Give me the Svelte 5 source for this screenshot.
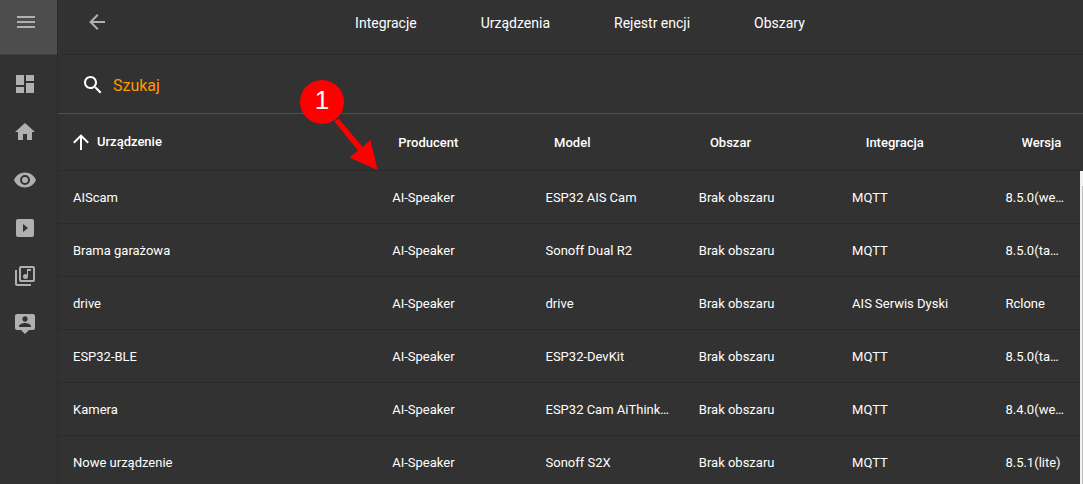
<script>
  const icons = {
    menu: 'M3,6H21V8H3V6M3,11H21V13H3V11M3,16H21V18H3V16Z',
    back: 'M20,11V13H8L13.5,18.5L12.08,19.92L4.16,12L12.08,4.08L13.5,5.5L8,11H20Z',
    search: 'M15.5 14h-.79l-.28-.27C15.41 12.59 16 11.11 16 9.5 16 5.91 13.09 3 9.5 3S3 5.91 3 9.5 5.91 16 9.5 16c1.61 0 3.09-.59 4.23-1.57l.27.28v.79l5 4.99L20.49 19l-4.99-5zm-6 0C7.01 14 5 11.99 5 9.5S7.01 5 9.5 5 14 7.01 14 9.5 11.99 14 9.5 14z',
    up: 'M13,20H11V8L5.5,13.5L4.08,12.08L12,4.16L19.92,12.08L18.5,13.5L13,8V20Z',
  };
  const sidebar = [
    { label: 'Pulpit', d: 'M13,3V9H21V3M13,21H21V11H13M3,21H11V15H3M3,13H11V3H3V13Z' },
    { label: 'Dom', d: 'M10,20V14H14V20H19V12H22L12,3L2,12H5V20H10Z' },
    { label: 'Podgląd', d: 'M12,9A3,3 0 0,0 9,12A3,3 0 0,0 12,15A3,3 0 0,0 15,12A3,3 0 0,0 12,9M12,17A5,5 0 0,1 7,12A5,5 0 0,1 12,7A5,5 0 0,1 17,12A5,5 0 0,1 12,17M12,4.5C7,4.5 2.73,7.61 1,12C2.73,16.39 7,19.5 12,19.5C17,19.5 21.27,16.39 23,12C21.27,7.61 17,4.5 12,4.5Z' },
    { label: 'Wideo', d: 'M19,3H5C3.89,3 3,3.89 3,5V19A2,2 0 0,0 5,21H19A2,2 0 0,0 21,19V5C21,3.89 20.1,3 19,3M10,16V8L15,12' },
    { label: 'Muzyka', d: 'M4,6H2V20A2,2 0 0,0 4,22H18V20H4M20,2H8A2,2 0 0,0 6,4V16A2,2 0 0,0 8,18H20A2,2 0 0,0 22,16V4A2,2 0 0,0 20,2M20,16H8V4H20M12.5,15A2.5,2.5 0 0,0 15,12.5V7H18V5H14V10.5C13.58,10.19 13.07,10 12.5,10A2.5,2.5 0 0,0 10,12.5A2.5,2.5 0 0,0 12.5,15' },
    { label: 'Osoby', d: 'M20,2H4A2,2 0 0,0 2,4V16A2,2 0 0,0 4,18H8L12,22L16,18H20A2,2 0 0,0 22,16V4A2,2 0 0,0 20,2M12,4.3C13.5,4.3 14.7,5.5 14.7,7C14.7,8.5 13.5,9.7 12,9.7C10.5,9.7 9.3,8.5 9.3,7C9.3,5.5 10.5,4.3 12,4.3M18,15H6V14.1C6,12.1 10,11 12,11C14,11 18,12.1 18,14.1V15Z' },
  ];
  const tabs = ['Integracje', 'Urządzenia', 'Rejestr encji', 'Obszary'];
  const columns = ['Producent', 'Model', 'Obszar', 'Integracja', 'Wersja'];
  const rows = [
    ['AIScam', 'AI-Speaker', 'ESP32 AIS Cam', 'Brak obszaru', 'MQTT', '8.5.0(we…'],
    ['Brama garażowa', 'AI-Speaker', 'Sonoff Dual R2', 'Brak obszaru', 'MQTT', '8.5.0(ta…'],
    ['drive', 'AI-Speaker', 'drive', 'Brak obszaru', 'AIS Serwis Dyski', 'Rclone'],
    ['ESP32-BLE', 'AI-Speaker', 'ESP32-DevKit', 'Brak obszaru', 'MQTT', '8.5.0(ta…'],
    ['Kamera', 'AI-Speaker', 'ESP32 Cam AiThink…', 'Brak obszaru', 'MQTT', '8.4.0(we…'],
    ['Nowe urządzenie', 'AI-Speaker', 'Sonoff S2X', 'Brak obszaru', 'MQTT', '8.5.1(lite)'],
  ];
  let query = $state('');
  const shown = $derived(rows.filter((r) => r.join(' ').toLowerCase().includes(query.toLowerCase())));
</script>

{#snippet icon(d)}
  <svg class="icon" viewBox="0 0 24 24" aria-hidden="true"><path {d} /></svg>
{/snippet}

<div class="app">
  <aside>
    <button class="menu" aria-label="Menu">{@render icon(icons.menu)}</button>
    <nav class="side">
      {#each sidebar as item}
        <a href="#top" aria-label={item.label}>{@render icon(item.d)}</a>
      {/each}
    </nav>
  </aside>

  <main>
    <header>
      <button class="back" aria-label="Wstecz">{@render icon(icons.back)}</button>
      <nav class="tabs">
        {#each tabs as tab}
          <a href="#top">{tab}</a>
        {/each}
      </nav>
    </header>

    <label class="search">
      {@render icon(icons.search)}
      <input type="text" placeholder="Szukaj" aria-label="Szukaj" bind:value={query} />
    </label>

    <div class="devices">
      <table>
        <thead>
          <tr>
            <th class="first">{@render icon(icons.up)}Urządzenie</th>
            {#each columns as column}
              <th>{column}</th>
            {/each}
          </tr>
        </thead>
        <tbody>
          {#each shown as row}
            <tr>
              {#each row as cell, i}
                <td class:first={i === 0}>{cell}</td>
              {/each}
            </tr>
          {/each}
        </tbody>
      </table>

      <div class="callout" aria-hidden="true">
        <svg viewBox="0 0 80 92">
          <circle cx="22" cy="22" r="22" />
          <path d="M34.500 41.500L38.500 38.500L62.500 67L70.500 60L77.500 90L49.500 77.500L58 70.500Z" />
        </svg>
        <span>1</span>
      </div>
    </div>
  </main>
</div>

<style>
  :global(body) {
    margin: 0;
    background: #323232;
  }
  .app {
    display: flex;
    height: 100vh;
    overflow: hidden;
    background: #323232;
    color: #fff;
    font: 13px/20px Roboto, sans-serif;
  }
  .icon {
    display: block;
    flex: none;
    width: 24px;
    height: 24px;
    fill: currentColor;
  }
  button {
    display: flex;
    align-items: center;
    padding: 0;
    border: 0;
    background: none;
    color: #b0b0b0;
    cursor: pointer;
  }
  a {
    color: inherit;
    text-decoration: none;
  }
  aside {
    flex: none;
    box-sizing: border-box;
    width: 58px;
    border-right: 1px solid #2b2b2b;
  }
  .menu {
    box-sizing: border-box;
    width: 100%;
    height: 54px;
    padding: 0 0 10px 14px;
    background: #4d4d4d;
  }
  .side {
    display: flex;
    flex-direction: column;
    gap: 24px;
    padding: 17px 13px;
    border-top: 1px solid #414141;
    color: #b0b0b0;
  }
  main {
    flex: 1;
    min-width: 0;
    display: flex;
    flex-direction: column;
  }
  header {
    flex: none;
    display: flex;
    align-items: center;
    height: 44px;
    padding: 0 44px 10px 27px;
    border-bottom: 1px solid #2b2b2b;
  }
  .back {
    width: 36px;
    height: 36px;
  }
  .tabs {
    flex: 1;
    display: flex;
    justify-content: center;
    gap: 64px;
    padding-top: 2px;
    font-size: 14px;
  }
  .search {
    flex: none;
    box-sizing: border-box;
    display: flex;
    align-items: center;
    gap: 8px;
    height: 59px;
    padding: 2px 23px 0;
    border-bottom: 1px solid #505050;
  }
  input {
    flex: 1;
    padding: 2px 0 0;
    border: 0;
    outline: 0;
    background: none;
    color: #fff;
    font: 16px/24px Roboto, sans-serif;
  }
  input::placeholder {
    color: #ff9800;
    opacity: 1;
  }
  .devices {
    position: relative;
    flex: 1;
    min-height: 0;
  }
  table {
    display: flex;
    flex-direction: column;
    height: 100%;
    text-align: left;
  }
  thead {
    display: block;
    flex: none;
  }
  tr {
    display: flex;
    align-items: center;
  }
  thead tr {
    height: 56px;
  }
  tbody {
    display: block;
    flex: 1;
    min-height: 0;
    overflow: hidden;
    padding-right: 3px;
    background:
      linear-gradient(#c1c1c1, #c1c1c1) right 0 top 16px / 1px 100% no-repeat,
      linear-gradient(#f1f1f1, #f1f1f1) right 0 top 1px / 3px 100% no-repeat;
  }
  tbody tr {
    height: 52px;
    border-top: 1px solid #2b2b2b;
  }
  th,
  td {
    box-sizing: border-box;
    flex: none;
    overflow: hidden;
    padding: 2px 24px 0 0;
    text-overflow: ellipsis;
    white-space: nowrap;
  }
  th {
    width: 15.2%;
    font-weight: 500;
  }
  td {
    width: 15%;
  }
  th:last-child {
    width: 6%;
    padding-right: 8px;
  }
  td:last-child {
    width: 7.3%;
    padding-right: 8px;
  }
  .first {
    flex: 1;
    min-width: 0;
    padding-left: 15px;
  }
  th.first {
    display: flex;
    align-items: center;
    gap: 4px;
    padding: 0 0 0 11px;
    line-height: 22px;
  }
  .callout {
    position: absolute;
    top: -34px;
    left: 242px;
    width: 80px;
    height: 92px;
    pointer-events: none;
  }
  .callout svg {
    display: block;
    fill: #f00;
  }
  .callout span {
    position: absolute;
    top: 5px;
    left: 0;
    width: 44px;
    font: 26px/30px "Liberation Sans", Arial, sans-serif;
    text-align: center;
  }
</style>
